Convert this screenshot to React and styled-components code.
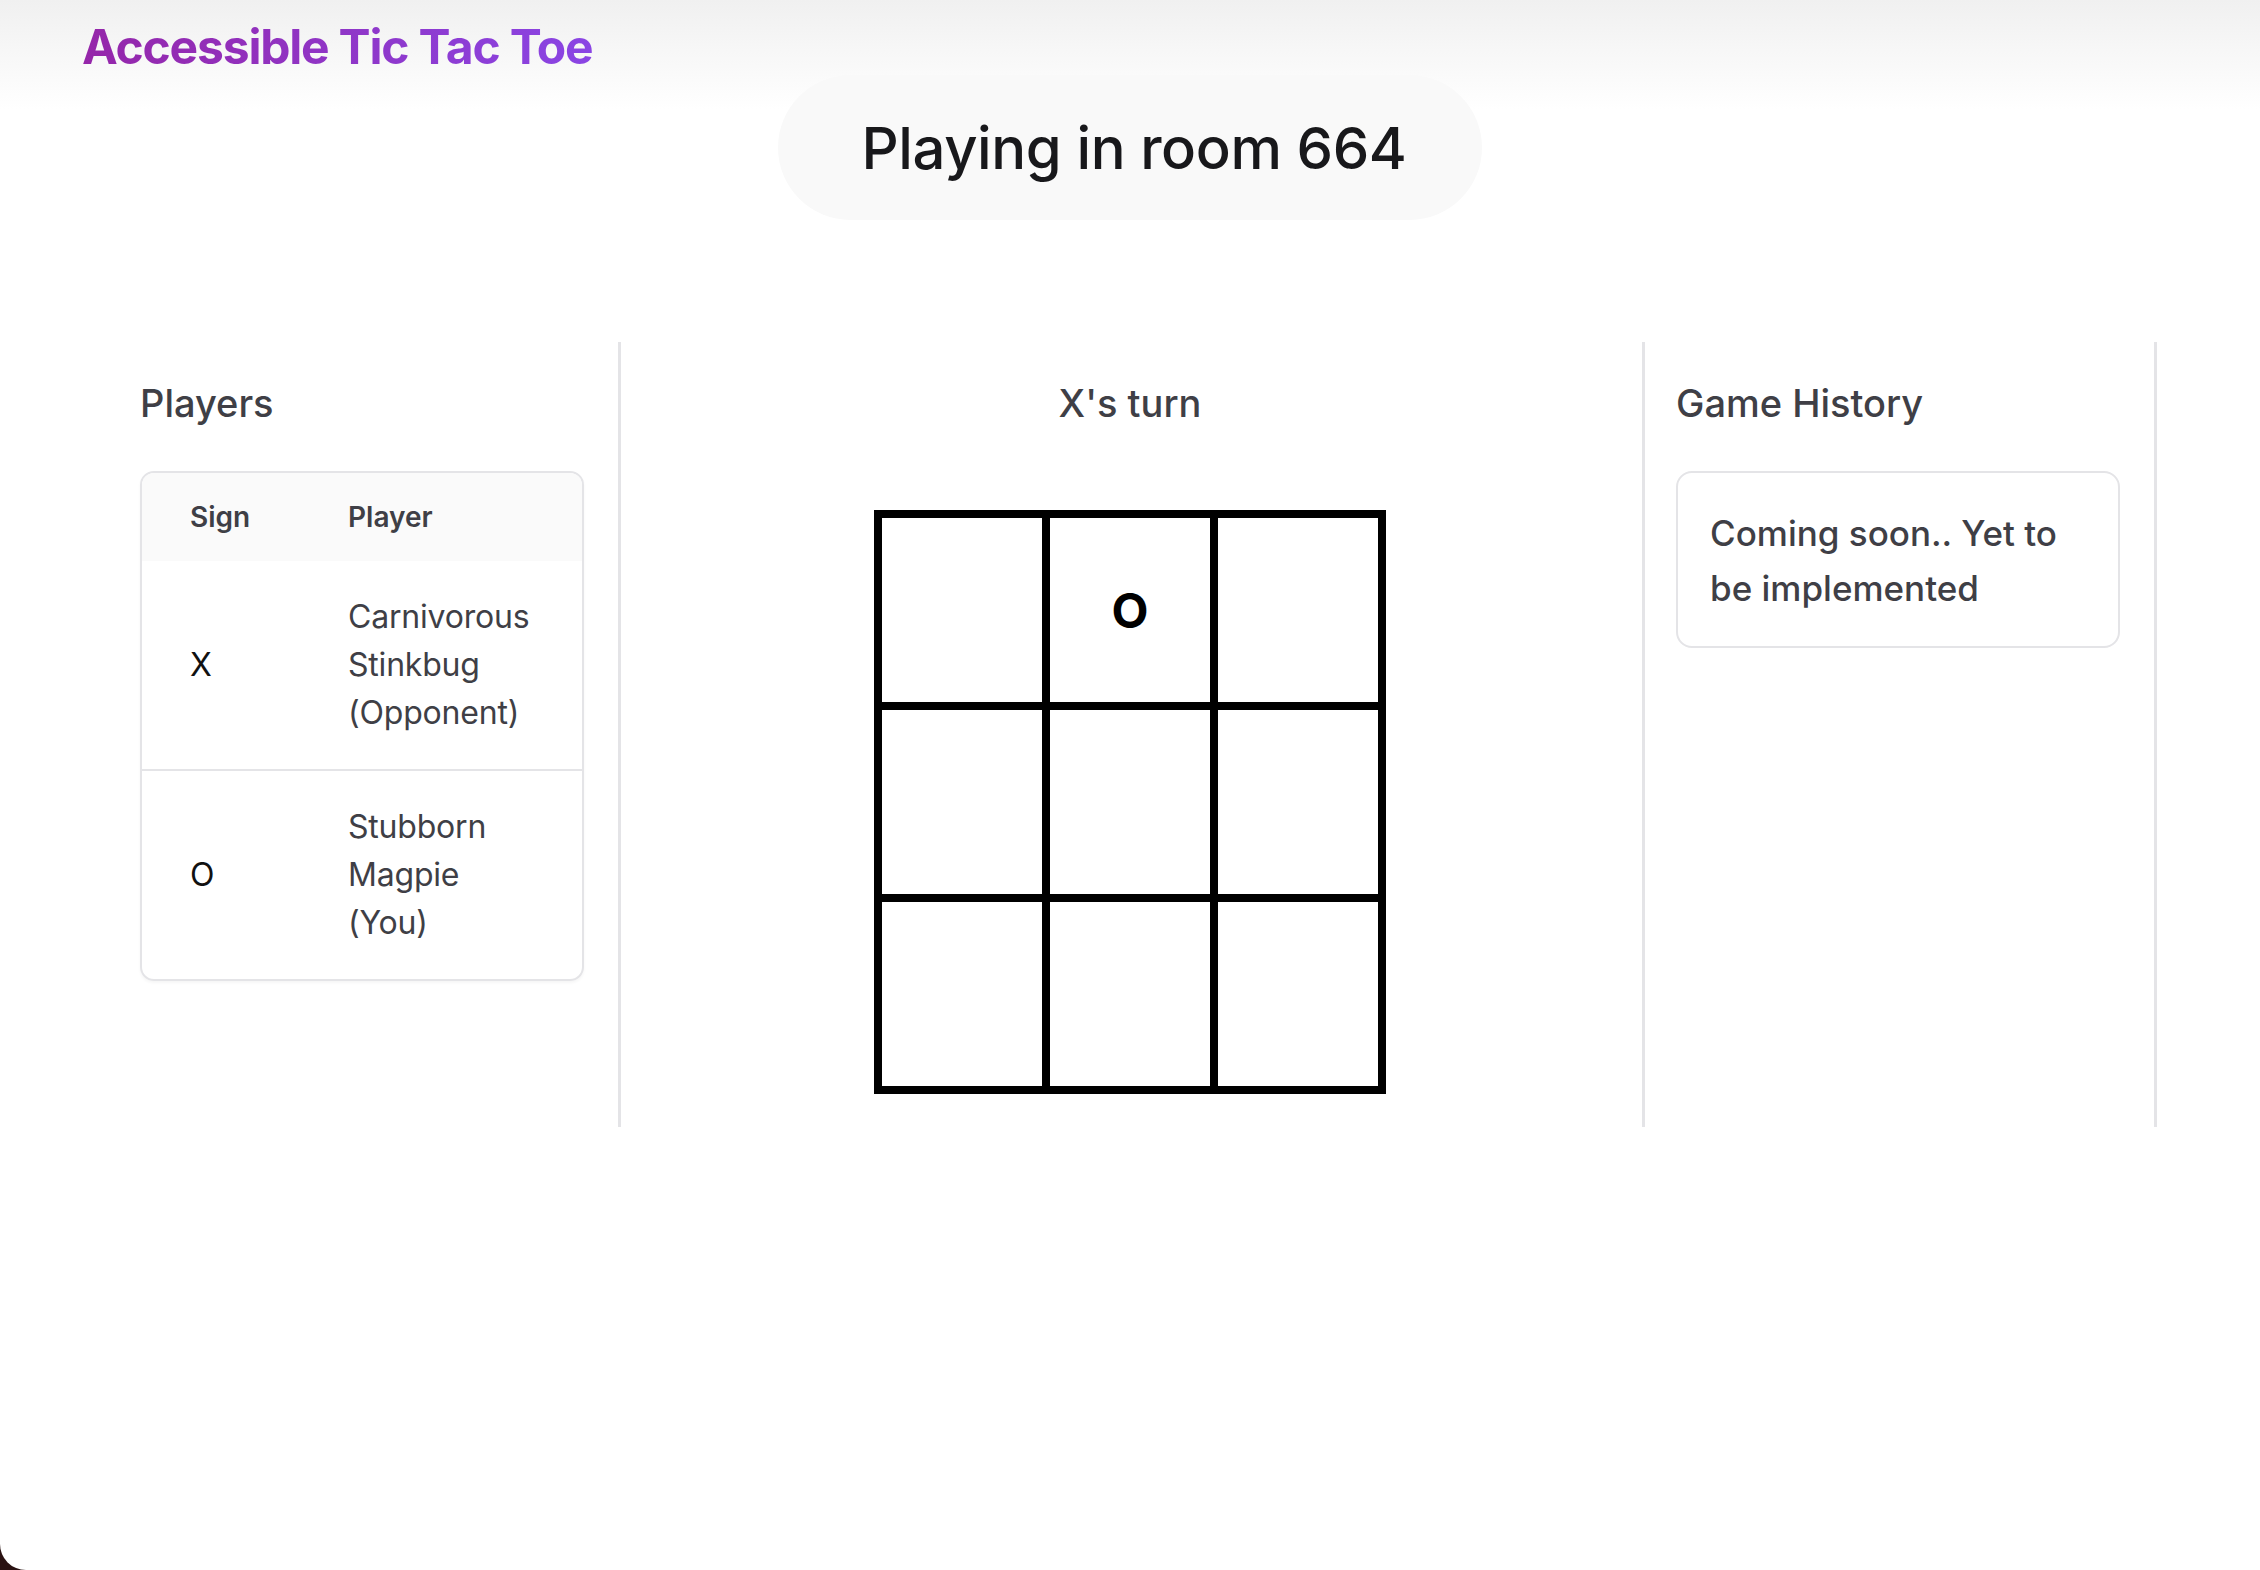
import styled, { createGlobalStyle } from 'styled-components';

const GlobalStyle = createGlobalStyle`
  html {
    background: #2a1212;
  }
  body {
    margin: 0;
    font-family: Inter, "Noto Sans", sans-serif;
    color: #3f3f46;
  }
  * {
    box-sizing: border-box;
  }
`;

//--------- PAGE ---------
const Page = styled.div`
  min-height: 1570px;
  background: linear-gradient(180deg, #f0f0f0 0, #ffffff 110px);
  border-bottom-left-radius: 26px;
  overflow: hidden;
`;

const Header = styled.header`
  height: 75px;
  padding: 20px 0 0 82px;
`;

const Title = styled.h1`
  margin: 0;
  display: inline-block;
  font-size: 48px;
  line-height: 54px;
  font-weight: 700;
  letter-spacing: -1.2px;
  background: linear-gradient(90deg, #9526a9, #8a45e4);
  -webkit-background-clip: text;
  background-clip: text;
  color: transparent;
`;

const RoomPill = styled.div`
  width: 704px;
  height: 145px;
  margin: 0 auto;
  border-radius: 73px;
  background: #f9f9f9;
  display: flex;
  align-items: center;
  justify-content: center;
  padding-left: 8px;
  font-size: 58px;
  font-weight: 500;
  letter-spacing: -0.4px;
  color: #18181b;
`;

//--------- GAME SECTION ---------
const Columns = styled.main`
  width: 2048px;
  margin: 122px 0 0 109px;
  display: grid;
  grid-template-columns: 1fr 2fr 1fr;
`;

const Panel = styled.section`
  min-height: 784px;
  padding: 33px 34px 33px 31px;
  border-right: 3px solid #e4e4e7;
  text-align: ${({ $center }) => ($center ? 'center' : 'left')};
`;

const Heading = styled.h2`
  margin: 0 0 40px;
  font-size: 38px;
  line-height: 56px;
  font-weight: 500;
  color: #3f3f46;
`;

const TableBox = styled.div`
  border: 2px solid #e4e4e7;
  border-radius: 14px;
  overflow: hidden;
  box-shadow: 0 2px 3px rgba(0, 0, 0, 0.04);
`;

const Table = styled.table`
  width: 100%;
  border-collapse: collapse;
  table-layout: fixed;
`;

const HeadCell = styled.th`
  width: ${({ $w }) => $w || 'auto'};
  padding: 24px 48px;
  background: #fafafa;
  text-align: left;
  font-size: 28px;
  line-height: 40px;
  font-weight: 600;
  color: #3f3f46;
`;

const Row = styled.tr`
  & + & {
    border-top: 2px solid #e4e4e7;
  }
`;

const Cell = styled.td`
  padding: 32px 48px;
  font-size: 32px;
  line-height: 48px;
  letter-spacing: -0.2px;
  vertical-align: middle;
  color: ${({ $dark }) => ($dark ? '#111111' : '#3f3f46')};
`;

const Board = styled.div`
  margin: 79px auto 0;
  width: 512px;
  display: grid;
  grid-template-columns: repeat(3, 160px);
  grid-auto-rows: 184px;
  gap: 8px;
  padding: 8px;
  background: #000;
`;

const Square = styled.button`
  border: 0;
  padding: 0;
  background: #fff;
  display: flex;
  align-items: center;
  justify-content: center;
  font-family: Inter, sans-serif;
  font-size: 48px;
  font-weight: 700;
  color: #000;
`;

const HistoryCard = styled.div`
  border: 2px solid #e4e4e7;
  border-radius: 16px;
  padding: 33px 32px 30px;
  font-size: 35px;
  line-height: 55px;
  font-weight: 500;
  color: #3f3f46;
`;

const players = [
  { sign: 'X', name: 'Carnivorous Stinkbug (Opponent)' },
  { sign: 'O', name: 'Stubborn Magpie (You)' },
];

const squares = ['', 'O', '', '', '', '', '', '', ''];

export default function App() {
  return (
    <>
      <GlobalStyle />
      <Page>
        <Header>
          <Title>Accessible Tic Tac Toe</Title>
        </Header>
        <RoomPill>Playing in room 664</RoomPill>
        <Columns>
          <Panel>
            <Heading>Players</Heading>
            <TableBox>
              <Table>
                <thead>
                  <tr>
                    <HeadCell $w="158px">Sign</HeadCell>
                    <HeadCell>Player</HeadCell>
                  </tr>
                </thead>
                <tbody>
                  {players.map((p) => (
                    <Row key={p.sign}>
                      <Cell $dark>{p.sign}</Cell>
                      <Cell>{p.name}</Cell>
                    </Row>
                  ))}
                </tbody>
              </Table>
            </TableBox>
          </Panel>
          <Panel $center>
            <Heading>X's turn</Heading>
            <Board>
              {squares.map((s, i) => (
                <Square key={i} aria-label={`square ${i + 1}`}>{s}</Square>
              ))}
            </Board>
          </Panel>
          <Panel>
            <Heading>Game History</Heading>
            <HistoryCard>Coming soon.. Yet to be implemented</HistoryCard>
          </Panel>
        </Columns>
      </Page>
    </>
  );
}
